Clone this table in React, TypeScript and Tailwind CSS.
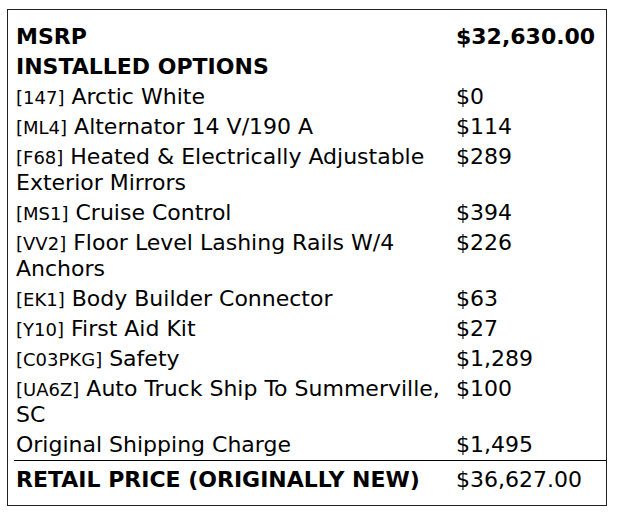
const options = [
  { code: "147", name: "Arctic White", price: "$0" },
  { code: "ML4", name: "Alternator 14 V/190 A", price: "$114" },
  { code: "F68", name: "Heated & Electrically Adjustable Exterior Mirrors", price: "$289" },
  { code: "MS1", name: "Cruise Control", price: "$394" },
  { code: "VV2", name: "Floor Level Lashing Rails W/4 Anchors", price: "$226" },
  { code: "EK1", name: "Body Builder Connector", price: "$63" },
  { code: "Y10", name: "First Aid Kit", price: "$27" },
  { code: "C03PKG", name: "Safety", price: "$1,289" },
  { code: "UA6Z", name: "Auto Truck Ship To Summerville, SC", price: "$100" },
];

function Row({ left, right, bold }: { left: React.ReactNode; right?: string; bold?: boolean }) {
  return (
    <div className={`grid grid-cols-[440px_139px] ${bold ? "font-bold" : ""}`}>
      <div className="px-[2px] py-[2px]">{left}</div>
      <div className="px-[2px] py-[2px]">{right}</div>
    </div>
  );
}

export default function App() {
  return (
    <div
      className="bg-white text-black pl-[7px] pt-[9px] text-[22px] leading-[26px]"
      style={{ fontFamily: '"DejaVu Sans", sans-serif' }}
    >
      <div className="w-[600px] h-[497px] border border-[#222] pl-[6px] pt-[12px]">
        <Row left="MSRP" right="$32,630.00" bold />
        <Row left="INSTALLED OPTIONS" bold />
        {options.map((o) => (
          <Row
            key={o.code}
            left={
              <>
                <span className="text-[18px] leading-none">[{o.code}]</span> {o.name}
              </>
            }
            right={o.price}
          />
        ))}
        <Row left="Original Shipping Charge" right="$1,495" />
        <div className="grid grid-cols-[440px_139px] border-t border-black">
          <div className="px-[2px] pt-[6px] pb-[2px] font-bold">RETAIL PRICE (ORIGINALLY NEW)</div>
          <div className="px-[2px] pt-[6px] pb-[2px]">$36,627.00</div>
        </div>
      </div>
    </div>
  );
}
